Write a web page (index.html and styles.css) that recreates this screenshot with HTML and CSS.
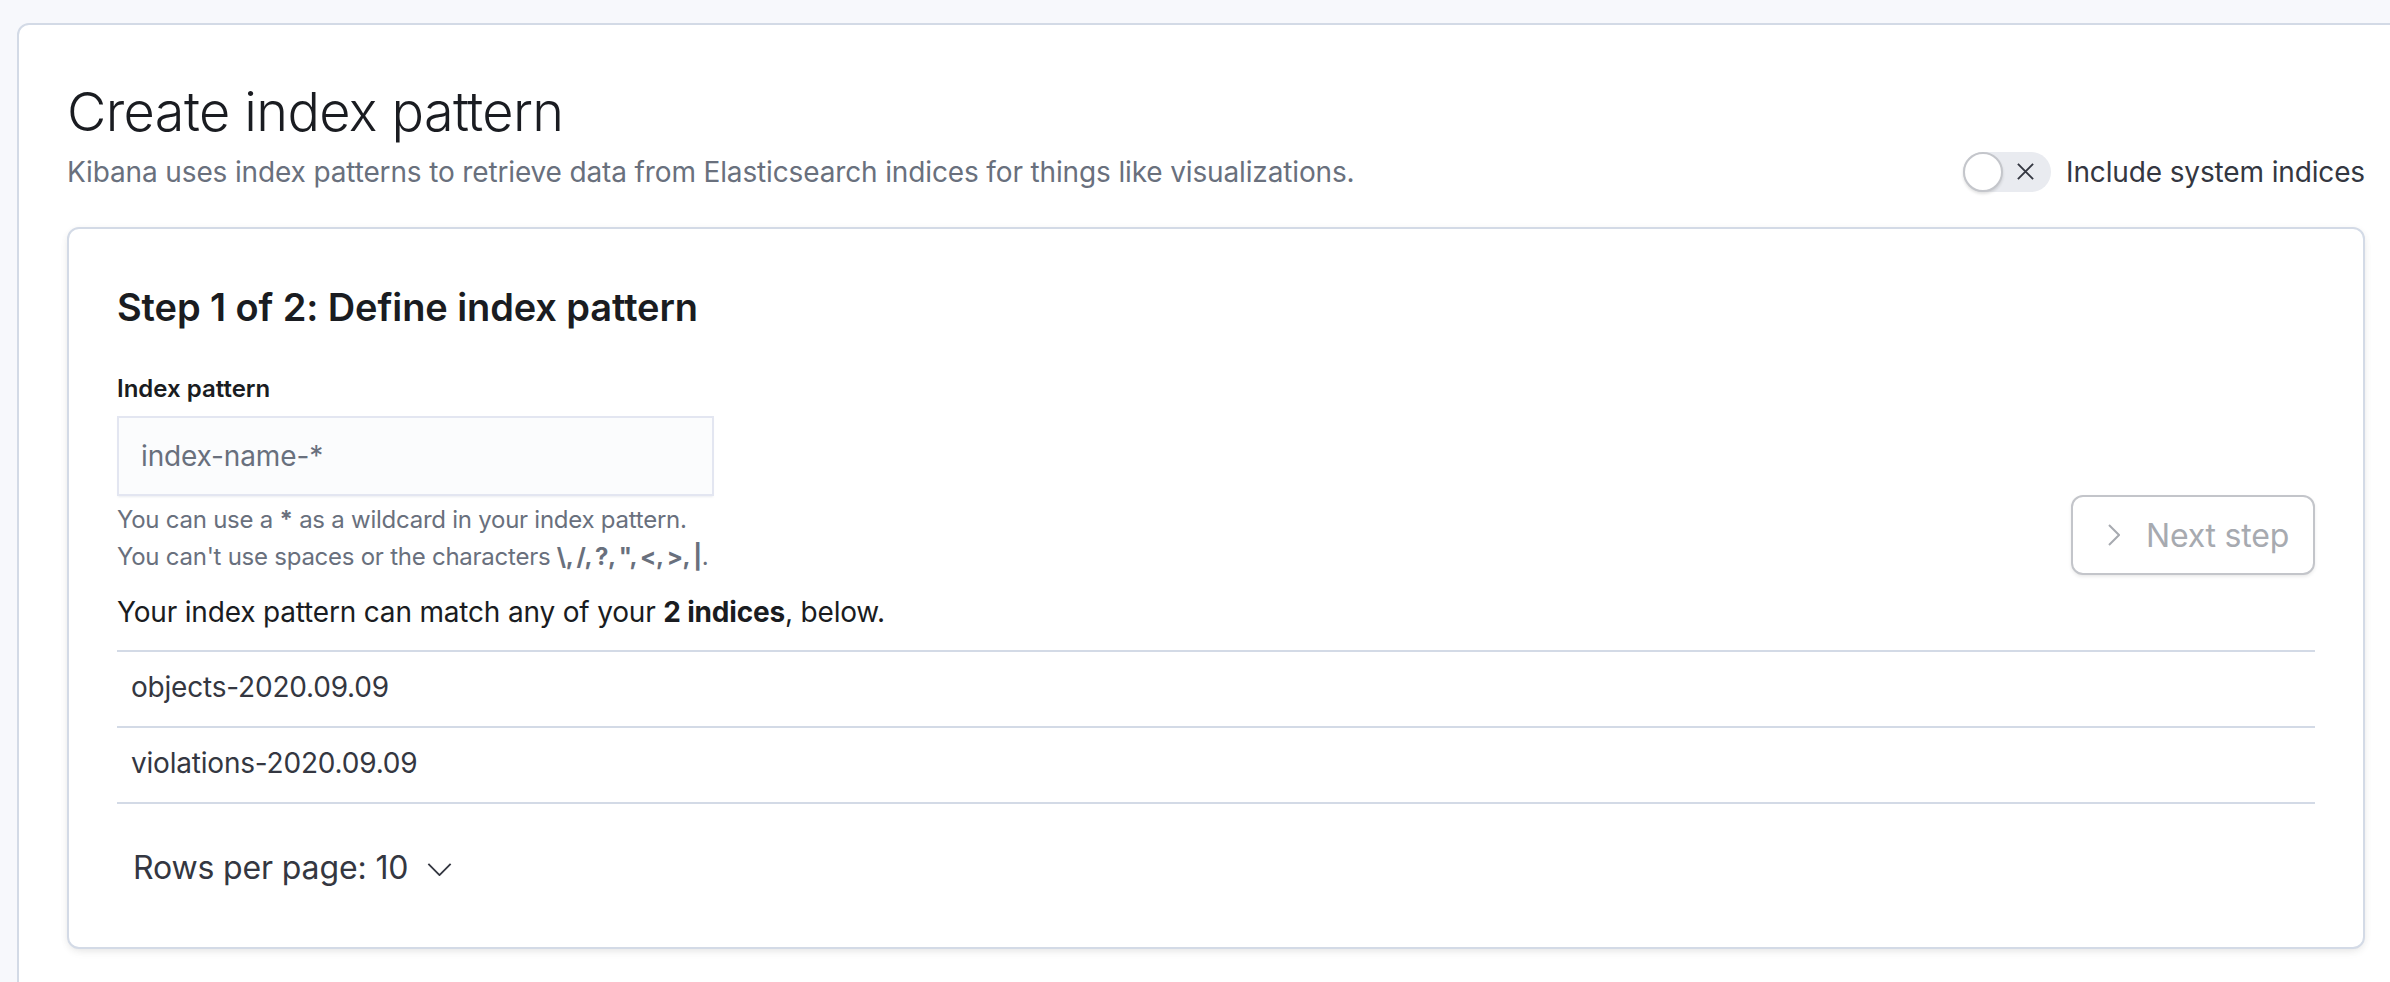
FILE: index.html
```html
<!DOCTYPE html>
<html lang="en">
<head>
<meta charset="utf-8">
<title>Create index pattern</title>
<link rel="stylesheet" href="styles.css">
</head>
<body>
<div class="page">
  <main class="content-panel">
    <header class="header">
      <div class="header-text">
        <h1 class="page-title">Create index pattern</h1>
        <p class="page-desc">Kibana uses index patterns to retrieve data from Elasticsearch indices for things like visualizations.</p>
      </div>
      <div class="switch-row">
        <span class="switch">
          <span class="switch-thumb"></span>
          <svg class="switch-x" viewBox="0 0 20 20" width="20" height="20"><path d="M2 2 L18 18 M18 2 L2 18" fill="none" stroke="#343741" stroke-width="2"/></svg>
        </span>
        <span class="switch-label">Include system indices</span>
      </div>
    </header>

    <section class="step-panel">
      <h2 class="step-title">Step 1 of 2: Define index pattern</h2>
      <div class="step-row">
        <div class="form">
          <label class="field-label" for="pattern">Index pattern</label>
          <input class="field" id="pattern" type="text" placeholder="index-name-*">
          <div class="help">
            <div>You can use a <strong>*</strong> as a wildcard in your index pattern.</div>
            <div>You can't use spaces or the characters <strong class="char-list">\, /, ?, ", &lt;, &gt;, |</strong>.</div>
          </div>
        </div>
        <button class="next-btn" type="button" disabled>
          <svg class="next-icon" viewBox="0 0 12 22" width="12" height="22"><path d="M1 1 L11 11 L1 21" fill="none" stroke="#a7aab0" stroke-width="2"/></svg>
          <span>Next step</span>
        </button>
      </div>

      <p class="match">Your index pattern can match any of your <strong>2 indices</strong>, below.</p>

      <div class="table">
        <div class="row">objects-2020.09.09</div>
        <div class="row">violations-2020.09.09</div>
      </div>

      <div class="pagination">
        <button class="rows-btn" type="button">
          <span>Rows per page: 10</span>
          <svg class="rows-icon" viewBox="0 0 26 14" width="26" height="14"><path d="M1 1 L13 13 L25 1" fill="none" stroke="#343741" stroke-width="2"/></svg>
        </button>
      </div>
    </section>
  </main>
</div>
</body>
</html>
```

FILE: styles.css
```css
html {
  overflow: hidden;
  background: #f7f8fc;
}

body {
  margin: 0;
  font-family: "Inter", "Noto Sans", sans-serif;
  color: #343741;
  background: #f7f8fc;
  letter-spacing: -0.14px;
}

.page {
  padding: 23px 0 0 17px;
}

.content-panel {
  display: block;
  width: 2298px;
  padding: 48px;
  background: #ffffff;
  border: 2px solid #d3dae6;
  border-radius: 12px;
}

.header {
  display: flex;
  justify-content: space-between;
  align-items: flex-end;
}

.page-title {
  margin: 7px 0 0;
  font-size: 54px;
  line-height: 64px;
  font-weight: 300;
  letter-spacing: -0.6px;
  color: #1a1c21;
}

.page-desc {
  margin: 8px 0 0;
  font-size: 28px;
  line-height: 40px;
  color: #69707d;
}

.switch-row {
  display: flex;
  align-items: center;
  height: 40px;
  gap: 15px;
}

.switch {
  position: relative;
  display: block;
  width: 88px;
  height: 40px;
  border-radius: 20px;
  background: #e9ebf0;
}

.switch-thumb {
  position: absolute;
  left: 0;
  top: 0;
  width: 40px;
  height: 40px;
  box-sizing: border-box;
  border-radius: 50%;
  background: #ffffff;
  border: 2px solid #c4c6cb;
  box-shadow: 0 2px 3px rgba(0, 0, 0, 0.12);
}

.switch-x {
  position: absolute;
  left: 53px;
  top: 10px;
  width: 19px;
  height: 19px;
}

.switch-label {
  font-size: 28px;
  line-height: 40px;
  color: #343741;
}

.step-panel {
  margin-top: 35px;
  padding: 48px;
  background: #ffffff;
  border: 2px solid #d3dae6;
  border-radius: 12px;
  box-shadow: 0 2px 8px -2px rgba(0, 0, 0, 0.1), 0 4px 12px -2px rgba(0, 0, 0, 0.05);
}

.step-title {
  margin: 7px 0 0;
  font-size: 38px;
  line-height: 47px;
  font-weight: 600;
  letter-spacing: -0.1px;
  color: #1a1c21;
}

.step-row {
  display: flex;
  justify-content: space-between;
  align-items: flex-end;
  margin-top: 42px;
}

.form {
  display: flex;
  flex-direction: column;
}

.field-label {
  display: block;
  font-size: 24px;
  line-height: 32px;
  font-weight: 600;
  letter-spacing: 0;
  color: #1a1c21;
  margin-bottom: 11px;
}

.field {
  display: block;
  box-sizing: border-box;
  width: 597px;
  height: 80px;
  margin: 0;
  padding: 0 24px;
  border: none;
  outline: none;
  border-radius: 0;
  background: #fbfcfd;
  box-shadow: inset 0 0 0 2px rgba(17, 43, 134, 0.1), 0 2px 2px -1px rgba(152, 162, 179, 0.2);
  font-family: inherit;
  font-size: 28px;
  letter-spacing: -0.14px;
  color: #343741;
}

.field::placeholder {
  color: #69707d;
  opacity: 1;
}

.help {
  margin-top: 5px;
  font-size: 24px;
  line-height: 37px;
  letter-spacing: -0.25px;
  color: #69707d;
}

.help strong {
  font-weight: 700;
  color: #69707d;
}

.help .char-list {
  letter-spacing: -0.4px;
  word-spacing: -1.5px;
}

.next-btn {
  display: flex;
  align-items: center;
  box-sizing: border-box;
  width: 244px;
  height: 80px;
  margin: 0;
  padding: 0 0 0 35px;
  background: #ffffff;
  border: 2px solid #c3c5ca;
  border-radius: 12px;
  box-shadow: 0 2px 4px -1px rgba(0, 0, 0, 0.12);
  font-family: inherit;
  font-size: 32px;
  letter-spacing: -0.2px;
  color: #a7aab0;
  cursor: default;
}

.next-icon {
  margin-right: 26px;
  flex: none;
}

.match {
  margin: 17px 0 0;
  font-size: 28px;
  line-height: 40px;
  letter-spacing: -0.18px;
  color: #1a1c21;
}

.match strong {
  font-weight: 700;
}

.table {
  margin-top: 18px;
  border-top: 2px solid #d3dae6;
}

.row {
  padding: 15px 14px 19px;
  font-size: 28px;
  line-height: 40px;
  letter-spacing: -0.2px;
  color: #343741;
  border-bottom: 2px solid #d3dae6;
}

.pagination {
  display: flex;
  align-items: center;
  height: 64px;
  margin-top: 31px;
}

.rows-btn {
  display: flex;
  align-items: center;
  gap: 19px;
  margin: 0;
  padding: 0 16px;
  height: 64px;
  background: none;
  border: none;
  font-family: inherit;
  font-size: 32px;
  letter-spacing: -0.14px;
  color: #343741;
}

.rows-icon {
  width: 25px;
  height: 13px;
  margin-top: 4px;
}
```
